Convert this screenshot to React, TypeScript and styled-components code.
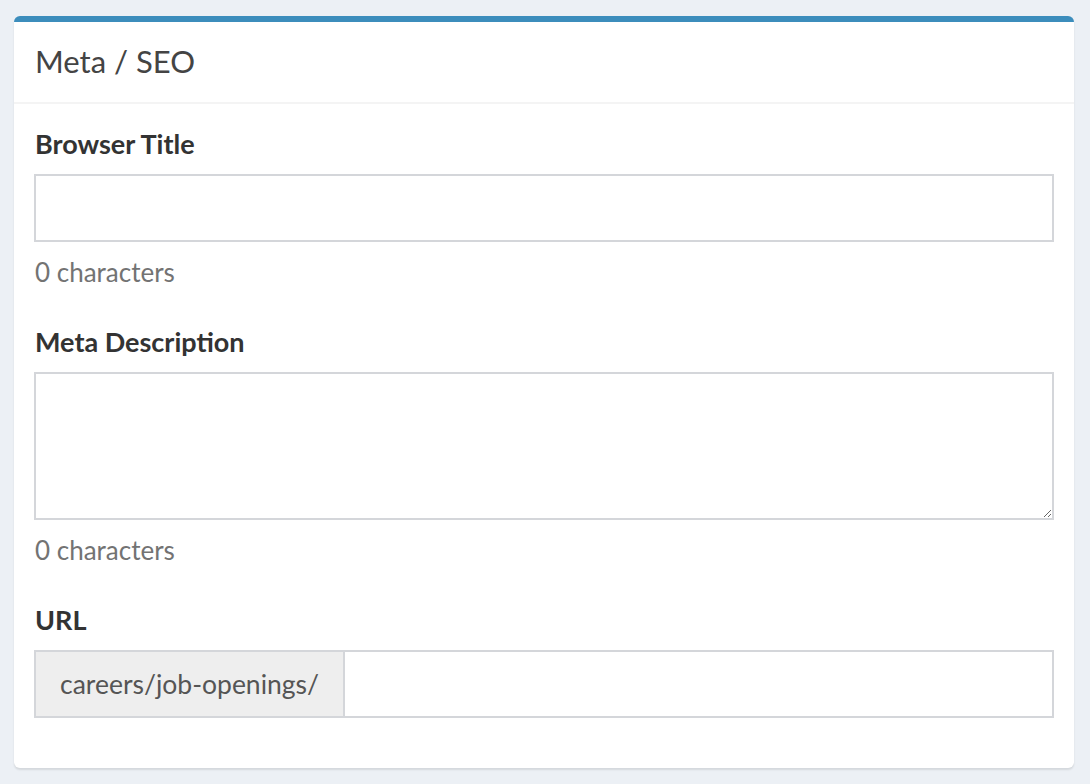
import React from "react";
import styled, { createGlobalStyle } from "styled-components";

const GlobalStyle = createGlobalStyle`
    html, body {
        margin: 0;
        padding: 0;
        background-color: #ecf0f5;
    }
    body {
        font-family: Lato, "Liberation Sans", sans-serif;
        color: #333;
    }
    * {
        box-sizing: border-box;
    }
`;

const Page = styled.div`
    padding: 16px 16px 16px 14px;
`;

const Box = styled.div`
    background-color: #fff;
    border-top: 6px solid #3c8dbc;
    border-radius: 6px;
    box-shadow: 0 2px 2px rgba(0, 0, 0, 0.1);
`;

const BoxHeader = styled.div`
    padding: 19px 20px 21px 21px;
    border-bottom: 2px solid #f4f4f4;
`;

const BoxTitle = styled.h3`
    margin: 0;
    font-size: 31px;
    line-height: 40px;
    font-weight: 400;
    color: #444;
`;

const BoxBody = styled.div`
    padding: 20px;
`;

const FormGroup = styled.div`
    margin-bottom: 30px;
`;

const Label = styled.label`
    display: block;
    margin: 0 0 10px 1px;
    font-size: 27px;
    line-height: 40px;
    font-weight: 700;
    color: #333;
`;

const fieldBase = `
    display: block;
    width: 100%;
    border: 2px solid #d4d6da;
    border-radius: 0;
    background-color: #fff;
    font-family: Lato, "Liberation Sans", sans-serif;
    font-size: 26px;
    color: #555;
    padding: 12px 24px;
    outline: none;
`;

const TextInput = styled.input`
    ${fieldBase}
    height: 68px;
`;

const TextArea = styled.textarea`
    ${fieldBase}
    height: 148px;
    resize: vertical;
`;

const HelpBlock = styled.span`
    display: block;
    margin: 10px 0 0 1px;
    font-size: 26px;
    line-height: 40px;
    color: #737373;
`;

const InputGroup = styled.div`
    display: flex;
    height: 68px;
`;

const Addon = styled.span`
    display: flex;
    align-items: center;
    padding: 0 24px;
    background-color: #eee;
    border: 2px solid #d4d6da;
    border-right: 0;
    font-size: 26.5px;
    color: #555;
    white-space: nowrap;
`;

const GroupInput = styled(TextInput)`
    flex: 1;
    width: auto;
    min-width: 0;
`;

export default function App() {
    return (
        <Page>
            <GlobalStyle />
            <Box>
                <BoxHeader>
                    <BoxTitle>Meta / SEO</BoxTitle>
                </BoxHeader>
                <BoxBody>
                    <FormGroup>
                        <Label htmlFor="browser-title">Browser Title</Label>
                        <TextInput id="browser-title" type="text" />
                        <HelpBlock>0 characters</HelpBlock>
                    </FormGroup>
                    <FormGroup>
                        <Label htmlFor="meta-description">Meta Description</Label>
                        <TextArea id="meta-description" />
                        <HelpBlock>0 characters</HelpBlock>
                    </FormGroup>
                    <FormGroup>
                        <Label htmlFor="url">URL</Label>
                        <InputGroup>
                            <Addon>careers/job-openings/</Addon>
                            <GroupInput id="url" type="text" />
                        </InputGroup>
                    </FormGroup>
                </BoxBody>
            </Box>
        </Page>
    );
}
